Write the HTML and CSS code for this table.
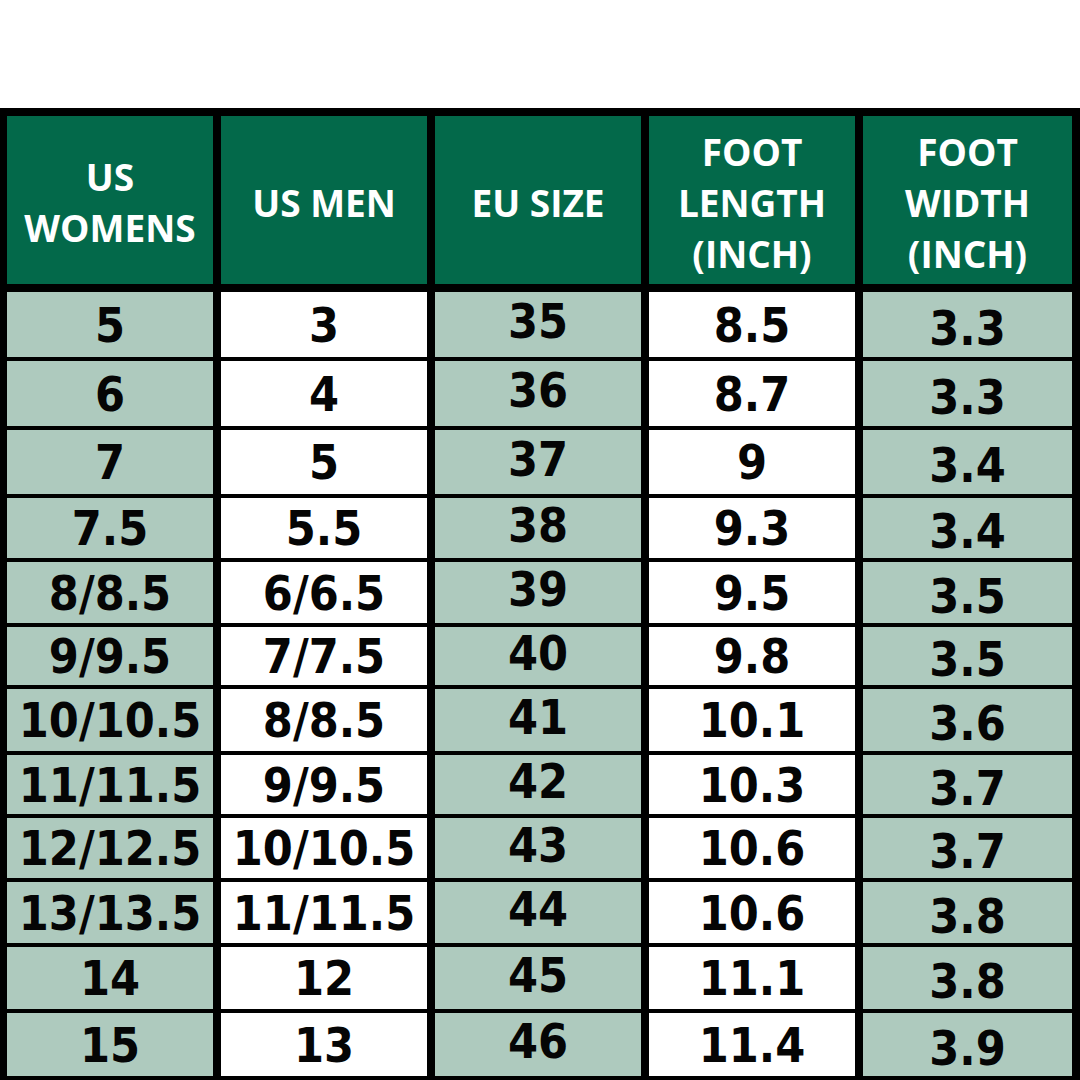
FILE: index.html
```html
<!DOCTYPE html>
<html lang="en">
<head>
<meta charset="utf-8">
<title>Size Chart</title>
<link rel="stylesheet" href="styles.css">
</head>
<body>
<div class="page">
  <div class="chart">
    <div class="head">
      <div class="hcell">US<br>WOMENS</div>
      <div class="hcell">US MEN</div>
      <div class="hcell">EU SIZE</div>
      <div class="hcell">FOOT<br>LENGTH<br>(INCH)</div>
      <div class="hcell">FOOT<br>WIDTH<br>(INCH)</div>
    </div>
    <div class="body">
      <div class="cell sage">5</div><div class="cell white">3</div><div class="cell sage eu">35</div><div class="cell white">8.5</div><div class="cell sage wd">3.3</div>
      <div class="cell sage">6</div><div class="cell white">4</div><div class="cell sage eu">36</div><div class="cell white">8.7</div><div class="cell sage wd">3.3</div>
      <div class="cell sage">7</div><div class="cell white">5</div><div class="cell sage eu">37</div><div class="cell white">9</div><div class="cell sage wd">3.4</div>
      <div class="cell sage">7.5</div><div class="cell white">5.5</div><div class="cell sage eu">38</div><div class="cell white">9.3</div><div class="cell sage wd">3.4</div>
      <div class="cell sage">8/8.5</div><div class="cell white">6/6.5</div><div class="cell sage eu">39</div><div class="cell white">9.5</div><div class="cell sage wd">3.5</div>
      <div class="cell sage">9/9.5</div><div class="cell white">7/7.5</div><div class="cell sage eu">40</div><div class="cell white">9.8</div><div class="cell sage wd">3.5</div>
      <div class="cell sage">10/10.5</div><div class="cell white">8/8.5</div><div class="cell sage eu">41</div><div class="cell white">10.1</div><div class="cell sage wd">3.6</div>
      <div class="cell sage">11/11.5</div><div class="cell white">9/9.5</div><div class="cell sage eu">42</div><div class="cell white">10.3</div><div class="cell sage wd">3.7</div>
      <div class="cell sage">12/12.5</div><div class="cell white">10/10.5</div><div class="cell sage eu">43</div><div class="cell white">10.6</div><div class="cell sage wd">3.7</div>
      <div class="cell sage">13/13.5</div><div class="cell white">11/11.5</div><div class="cell sage eu">44</div><div class="cell white">10.6</div><div class="cell sage wd">3.8</div>
      <div class="cell sage">14</div><div class="cell white">12</div><div class="cell sage eu">45</div><div class="cell white">11.1</div><div class="cell sage wd">3.8</div>
      <div class="cell sage">15</div><div class="cell white">13</div><div class="cell sage eu">46</div><div class="cell white">11.4</div><div class="cell sage wd">3.9</div>
    </div>
  </div>
</div>
</body>
</html>
```
FILE: styles.css
```css
html, body {
  margin: 0;
  padding: 0;
  background: #ffffff;
}

.page {
  width: 1080px;
  height: 1080px;
  padding-top: 108px;
  box-sizing: border-box;
  overflow: hidden;
}

.chart {
  display: flex;
  flex-direction: column;
  gap: 8px;
  background: #000000;
  padding: 8px 8px 4px 7px;
  box-sizing: border-box;
  height: 972px;
}

.head,
.body {
  display: grid;
  grid-template-columns: 206px 206px 206px 206px 209px;
  column-gap: 8px;
}

.head {
  grid-template-rows: 168px;
}

.body {
  row-gap: 4px;
  grid-template-rows: 65px 65px 64px 60px 61px 58px 62px 59px 60px 61px 62px 63px;
}

.hcell {
  background: #03694a;
  color: #ffffff;
  font-family: "Open Sans", "Liberation Sans", sans-serif;
  font-weight: 700;
  font-size: 37px;
  line-height: 51px;
  text-align: center;
  display: flex;
  align-items: center;
  justify-content: center;
  padding-top: 4px;
  box-sizing: border-box;
}

.cell {
  display: flex;
  align-items: center;
  justify-content: center;
  font-family: "DejaVu Sans Condensed", "DejaVu Sans", sans-serif;
  font-stretch: condensed;
  font-weight: 700;
  font-size: 48px;
  line-height: 1;
  color: #050505;
  box-sizing: border-box;
  white-space: nowrap;
}

.sage {
  background: #aecabe;
}

.white {
  background: #ffffff;
}

.eu {
  padding-bottom: 7px;
}

.wd {
  padding-top: 6px;
}
```
